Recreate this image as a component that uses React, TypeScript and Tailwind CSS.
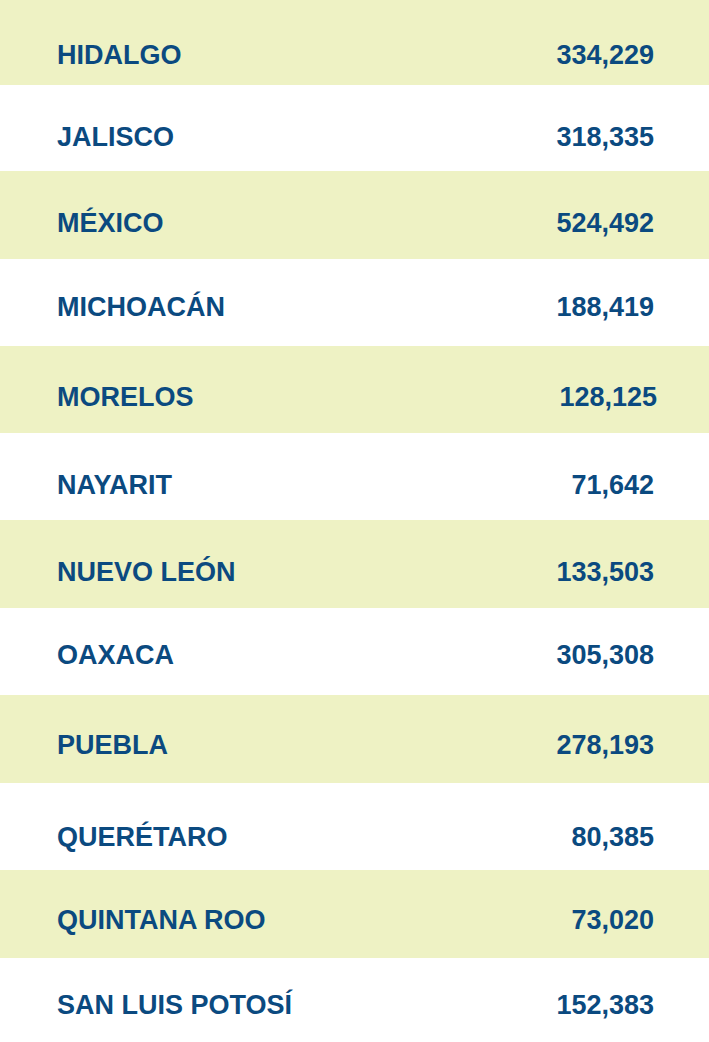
const rows = [
  { name: "HIDALGO", total: "334,229", h: "h-[85px]", pt: "pt-[42px]", shade: true },
  { name: "JALISCO", total: "318,335", h: "h-[86px]", pt: "pt-[39px]", shade: false },
  { name: "MÉXICO", total: "524,492", h: "h-[88px]", pt: "pt-[39px]", shade: true },
  { name: "MICHOACÁN", total: "188,419", h: "h-[87px]", pt: "pt-[35px]", shade: false },
  { name: "MORELOS", total: "128,125", h: "h-[87px]", pt: "pt-[38px]", shade: true, nudge: true },
  { name: "NAYARIT", total: "71,642", h: "h-[87px]", pt: "pt-[39px]", shade: false },
  { name: "NUEVO LEÓN", total: "133,503", h: "h-[88px]", pt: "pt-[39px]", shade: true },
  { name: "OAXACA", total: "305,308", h: "h-[87px]", pt: "pt-[34px]", shade: false },
  { name: "PUEBLA", total: "278,193", h: "h-[88px]", pt: "pt-[37px]", shade: true },
  { name: "QUERÉTARO", total: "80,385", h: "h-[87px]", pt: "pt-[41px]", shade: false },
  { name: "QUINTANA ROO", total: "73,020", h: "h-[88px]", pt: "pt-[37px]", shade: true },
  { name: "SAN LUIS POTOSÍ", total: "152,383", h: "h-[84px]", pt: "pt-[34px]", shade: false },
];

export default function App() {
  return (
    <div className="w-[709px] h-[1042px] overflow-hidden bg-white font-['Liberation_Sans',Arial,sans-serif] font-bold text-[27px] leading-[26px] text-[#0b4a80]">
      {rows.map((row) => (
        <div
          key={row.name}
          className={`flex justify-between pl-[57px] pr-[55px] ${row.h} ${row.pt} ${
            row.shade ? "bg-[#eef2c4]" : "bg-white"
          }`}
        >
          <span>{row.name}</span>
          <span className={row.nudge ? "mr-[-3px]" : ""}>{row.total}</span>
        </div>
      ))}
    </div>
  );
}
